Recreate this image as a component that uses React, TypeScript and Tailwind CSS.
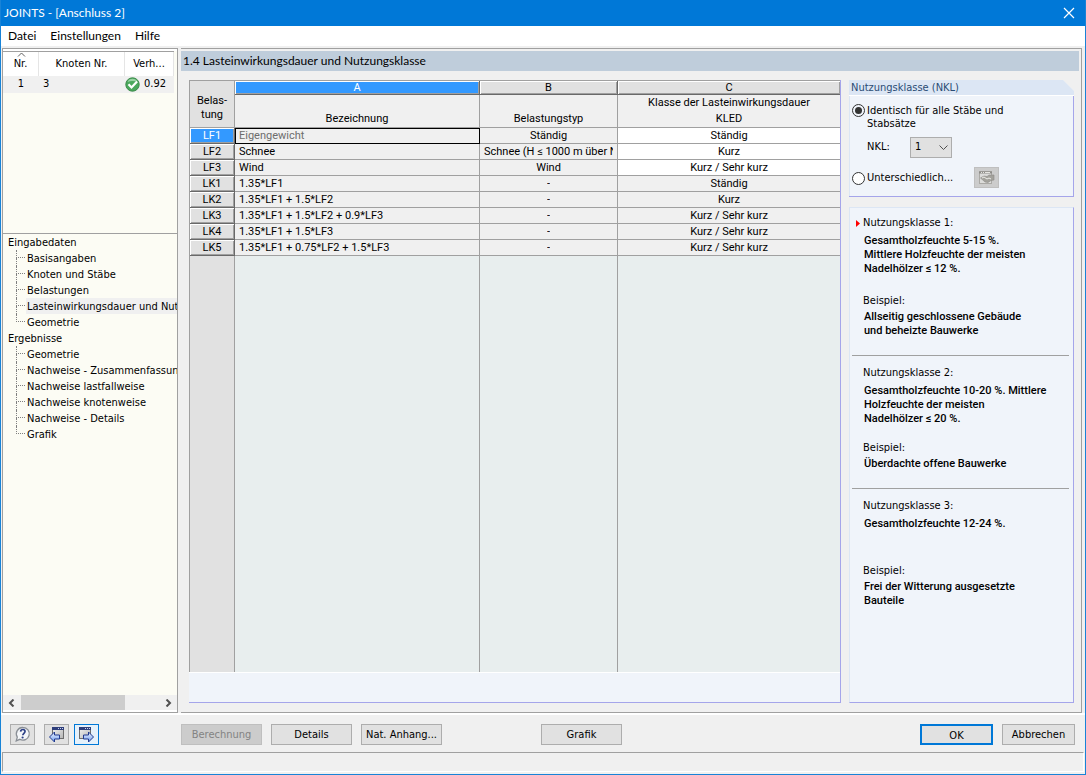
import { useState, type ReactNode } from "react";

const UI = "font-['DejaVu_Sans_Condensed','Open_Sans',sans-serif]";
const CAPTION = "font-['Lato',sans-serif]";
const GRID = "font-['Roboto',sans-serif]";
const BEVEL = "shadow-[inset_1px_1px_0_#ffffff,inset_-1px_-1px_0_#a0a0a0]";

const inputPages = [
  "Basisangaben",
  "Knoten und Stäbe",
  "Belastungen",
  "Lasteinwirkungsdauer und Nutzungsklasse",
  "Geometrie",
];
const resultPages = [
  "Geometrie",
  "Nachweise - Zusammenfassung",
  "Nachweise lastfallweise",
  "Nachweise knotenweise",
  "Nachweise - Details",
  "Grafik",
];

const loads = [
  { id: "LF1", name: "Eigengewicht", type: "Ständig", kled: "Ständig", editable: true },
  { id: "LF2", name: "Schnee", type: "Schnee (H ≤ 1000 m über NN)", kled: "Kurz", editable: true },
  { id: "LF3", name: "Wind", type: "Wind", kled: "Kurz / Sehr kurz", editable: true },
  { id: "LK1", name: "1.35*LF1", type: "-", kled: "Ständig", editable: false },
  { id: "LK2", name: "1.35*LF1 + 1.5*LF2", type: "-", kled: "Kurz", editable: false },
  { id: "LK3", name: "1.35*LF1 + 1.5*LF2 + 0.9*LF3", type: "-", kled: "Kurz / Sehr kurz", editable: false },
  { id: "LK4", name: "1.35*LF1 + 1.5*LF3", type: "-", kled: "Kurz / Sehr kurz", editable: false },
  { id: "LK5", name: "1.35*LF1 + 0.75*LF2 + 1.5*LF3", type: "-", kled: "Kurz / Sehr kurz", editable: false },
];

const classes = [
  {
    title: "Nutzungsklasse 1:",
    text: ["Gesamtholzfeuchte 5-15 %.", "Mittlere Holzfeuchte der meisten", "Nadelhölzer ≤ 12 %."],
    example: ["Allseitig geschlossene Gebäude", "und beheizte Bauwerke"],
    textBox: "min-h-[59px]",
    active: true,
  },
  {
    title: "Nutzungsklasse 2:",
    text: ["Gesamtholzfeuchte 10-20 %. Mittlere", "Holzfeuchte der meisten", "Nadelhölzer ≤ 20 %."],
    example: ["Überdachte offene Bauwerke"],
    textBox: "min-h-[56px]",
    active: false,
  },
  {
    title: "Nutzungsklasse 3:",
    text: ["Gesamtholzfeuchte 12-24 %."],
    example: ["Frei der Witterung ausgesetzte", "Bauteile"],
    textBox: "min-h-[46px]",
    active: false,
  },
];

function TreeGroup({ label, items, selected }: { label: string; items: string[]; selected?: string }) {
  return (
    <li>
      <div className="h-4 pl-[5px] leading-[18px]">{label}</div>
      <ul>
        {items.map((item, i) => (
          <li key={item} className="flex h-4 pl-[13px]">
            <span className="w-[9px] shrink-0">
              <span className="block h-2 border-b border-l border-dotted border-[#808080]" />
              {i < items.length - 1 && <span className="block h-2 border-l border-dotted border-[#808080]" />}
            </span>
            <a
              href="#"
              className={`ml-px grow pl-px leading-[18px] whitespace-nowrap ${item === selected ? "bg-[#f0f0f0]" : ""}`}
            >
              {item}
            </a>
          </li>
        ))}
      </ul>
    </li>
  );
}

function PushButton({ children, className = "", disabled }: { children: ReactNode; className?: string; disabled?: boolean }) {
  return (
    <button
      disabled={disabled}
      className={`h-[21px] shrink-0 text-center leading-[19px] whitespace-nowrap ${
        disabled ? "border border-[#bfbfbf] bg-[#cccccc] text-[#838383]" : ""
      } ${className}`}
    >
      {children}
    </button>
  );
}

function HelpIcon() {
  return (
    <svg width="17" height="17" viewBox="0 0 17 17" className="mx-auto">
      <path d="M9 1.500a6.300 6.300 0 1 1-3.100 11.800L2.200 14.800l1.100-3.700A6.300 6.300 0 0 1 9 1.500z" fill="#f4f6f9" stroke="#8a8f96" strokeWidth="1.300" />
      <path d="M6.600 5.600c.3-2.900 4.800-2.700 4.400 0-.2 1.700-2.100 1.700-2.200 3.600" fill="none" stroke="#2b3f86" strokeWidth="1.700" />
      <circle cx="8.600" cy="11.500" r="1.100" fill="#2b3f86" />
    </svg>
  );
}

function PageIcon({ forward }: { forward?: boolean }) {
  const id = forward ? "page-forward" : "page-back";
  return (
    <svg width="17" height="17" viewBox="0 0 17 17" className="mx-auto">
      <defs>
        <linearGradient id={id} x1="0" y1="0" x2="1" y2="1">
          <stop offset="0" stopColor="#f4f4f4" />
          <stop offset="1" stopColor="#b4b4b4" />
        </linearGradient>
        <linearGradient id={`${id}-arrow`} x1="0" y1="0" x2="0" y2="1">
          <stop offset="0" stopColor="#f2f7ff" />
          <stop offset="1" stopColor="#6f9cf0" />
        </linearGradient>
      </defs>
      <g transform={forward ? "translate(-3 0)" : undefined}>
        <rect x="4.500" y="1.500" width="11" height="11" fill={`url(#${id})`} stroke="#6e6e6e" />
        <rect x="4" y="1" width="12" height="3" fill="#2f3f7c" />
        <path d="M10 2.500h1M12 2.500h1M14 2.500h1" stroke="#c9d2ee" />
      </g>
      <path
        d={forward ? "M5.500 9h5V6l5 5-5 5v-3h-5z" : "M11.500 9h-5V6l-5 5 5 5v-3h5z"}
        fill={`url(#${id}-arrow)`}
        stroke="#20398f"
      />
    </svg>
  );
}

function CheckIcon() {
  return (
    <svg width="15" height="15" viewBox="0 0 15 15" className="shrink-0">
      <circle cx="7.500" cy="7.500" r="6.700" fill="#4aa85c" stroke="#3d8a4c" />
      <path d="M2.500 5a5.500 5.500 0 0 1 10 0c-3-1.500-7-1.500-10 0z" fill="#9ad3a4" />
      <path d="M3.500 7.300l3 3.200 5.600-6" fill="none" stroke="#ffffff" strokeWidth="2.200" />
    </svg>
  );
}

function PickIcon() {
  return (
    <svg width="17" height="15" viewBox="0 0 17 15" className="mx-auto">
      <rect x="1.500" y="1.500" width="12" height="12" fill="#dcdcda" stroke="#aaa9a5" />
      <path d="M1 2.500h13" stroke="#8d8c88" strokeWidth="2" />
      <path d="M3 2.500h1M5 2.500h1M7 2.500h5" stroke="#e6e5e0" />
      <path d="M2.500 8l3.500-2 3 .5 2-1.500h5v5l-3 .5-3 2-3-.5z" fill="#a3a29c" stroke="#8d8c88" strokeWidth=".6" />
      <path d="M4 8l2-1 3 2 2-1 2 1" stroke="#eeede8" fill="none" />
    </svg>
  );
}

export default function App() {
  const [mode, setMode] = useState("same");

  return (
    <div className={`flex min-h-screen flex-col border border-t-0 border-[#1883d7] bg-[#f0f0f0] text-[11px] text-black ${UI}`}>
      <header className={`flex h-[26px] shrink-0 items-center justify-between bg-[#0078d7] pr-2 pl-[3px] text-xs text-white ${CAPTION}`}>
        <h1>JOINTS - [Anschluss 2]</h1>
        <button aria-label="Schließen">
          <svg width="16" height="16" viewBox="0 0 16 16" fill="none" stroke="#ffffff" strokeWidth="1.200">
            <path d="M3 3l10 10M13 3L3 13" />
          </svg>
        </button>
      </header>
      <nav className={`flex h-5 shrink-0 items-center gap-[14px] bg-white px-[7px] text-xs ${CAPTION}`}>
        <button>Datei</button>
        <button>Einstellungen</button>
        <button>Hilfe</button>
      </nav>

      <div className="mt-[2px] flex grow gap-[3px] border-b-2 border-white pr-[3px] pl-px">
        <aside className="flex w-[176px] shrink-0 flex-col border border-[#a0a0a0] bg-[#fcfcf4]">
          <div className="h-[184px] shrink-0 border-t-2 border-white pr-[3px]">
            <table className="w-full table-fixed border-separate border-spacing-0 border-t border-[#a0a0a0]">
              <colgroup>
                <col className="w-9" />
                <col className="w-[86px]" />
                <col />
              </colgroup>
              <thead>
                <tr className="h-6 bg-white">
                  <th className="relative border-r border-[#e5e5e5] font-normal">
                    <svg width="9" height="5" viewBox="0 0 9 5" className="absolute top-0 left-[14px]" fill="none" stroke="#606060">
                      <path d="M1 4.500L4.500 1 8 4.500" />
                    </svg>
                    Nr.
                  </th>
                  <th className="border-r border-[#e5e5e5] font-normal">Knoten Nr.</th>
                  <th className="border-r border-[#e5e5e5] font-normal">Verh...</th>
                </tr>
              </thead>
              <tbody>
                <tr className="h-[17px] bg-[#f0f0f0]">
                  <td className="text-center">1</td>
                  <td className="pl-1">3</td>
                  <td>
                    <span className="flex items-center gap-1">
                      <CheckIcon />
                      0.92
                    </span>
                  </td>
                </tr>
              </tbody>
            </table>
          </div>
          <div className="flex w-full grow flex-col overflow-hidden border-t border-[#a0a0a0]">
            <ul className="grow overflow-hidden">
              <TreeGroup label="Eingabedaten" items={inputPages} selected={inputPages[3]} />
              <TreeGroup label="Ergebnisse" items={resultPages} />
            </ul>
            <div className="flex h-[17px] shrink-0 items-stretch border-b-2 border-white bg-[#f0f0f0]">
              <button aria-label="Nach links" className="w-[18px]">
                <svg width="8" height="8" viewBox="0 0 8 8" className="mx-auto" fill="none" stroke="#505050" strokeWidth="2">
                  <path d="M5.500 .5L2 4l3.500 3.500" />
                </svg>
              </button>
              <div className="grow">
                <div className="h-full w-3/4 bg-[#cdcdcd]" />
              </div>
              <button aria-label="Nach rechts" className="w-[18px]">
                <svg width="8" height="8" viewBox="0 0 8 8" className="mx-auto" fill="none" stroke="#505050" strokeWidth="2">
                  <path d="M2.500 .5L6 4 2.500 7.500" />
                </svg>
              </button>
            </div>
          </div>
        </aside>

        <main className="flex min-w-0 grow flex-col border border-l-0 border-[#a0a0a0]">
          <h2 className={`mt-[2px] mr-[2px] h-5 bg-[#bfcddb] pl-[2px] text-xs leading-5 ${CAPTION}`}>
            1.4 Lasteinwirkungsdauer und Nutzungsklasse
          </h2>
          <div className="flex grow gap-2 pt-[9px] pr-[7px] pb-[9px] pl-2">
            <section className={`flex min-w-0 grow flex-col border-r border-b border-[#a5a5ea] bg-[#f0f4fa] ${GRID}`}>
              <table className="w-full table-fixed border-separate border-spacing-0 border-t border-l border-[#a0a0a0] bg-[#f0f0f0]">
                <colgroup>
                  <col className="w-[45px]" />
                  <col className="w-[245px]" />
                  <col className="w-[138px]" />
                  <col />
                </colgroup>
                <thead>
                  <tr className="h-[14px] leading-[12px]">
                    <th rowSpan={2} className="border-r border-b border-[#a0a0a0] bg-[#e1e1e1] px-0 pt-2 leading-[14px] font-normal">
                      Belas-
                      <br />
                      tung
                    </th>
                    <th className={`border-r border-b border-[#696969] bg-[#3399ff] p-0 font-normal text-white ${BEVEL}`}>A</th>
                    <th className={`border-r border-b border-[#696969] bg-[#e1e1e1] p-0 font-normal ${BEVEL}`}>B</th>
                    <th className={`border-b border-[#696969] bg-[#e1e1e1] p-0 font-normal ${BEVEL}`}>C</th>
                  </tr>
                  <tr className="h-[33px] align-bottom leading-4">
                    <th className="border-r border-b border-[#a0a0a0] p-0 font-normal">Bezeichnung</th>
                    <th className="border-r border-b border-[#a0a0a0] p-0 font-normal">Belastungstyp</th>
                    <th className="border-b border-[#a0a0a0] p-0 font-normal">
                      Klasse der Lasteinwirkungsdauer
                      <br />
                      KLED
                    </th>
                  </tr>
                </thead>
                <tbody>
                  {loads.map((row, i) => (
                    <tr key={row.id} className="h-4 leading-[15px] whitespace-nowrap">
                      <th
                        className={`border-r border-b border-[#696969] p-0 font-normal ${BEVEL} ${
                          i === 0 ? "bg-[#3399ff] text-white" : "bg-[#e1e1e1]"
                        }`}
                      >
                        {row.id}
                      </th>
                      <td
                        className={`border-r border-b border-[#a0a0a0] p-0 pl-1 ${
                          i === 0 ? "text-[#6d6d6d] outline-1 -outline-offset-1 outline-black" : ""
                        }`}
                      >
                        {row.name}
                      </td>
                      <td className="border-r border-b border-[#a0a0a0] p-0 px-1">
                        <div className="mx-auto w-fit max-w-full overflow-hidden">{row.type}</div>
                      </td>
                      <td className={`border-b border-[#a0a0a0] p-0 text-center ${row.editable ? "bg-white" : ""}`}>
                        {row.kled}
                      </td>
                    </tr>
                  ))}
                </tbody>
              </table>
              <div className="grid grow grid-cols-[46px_245px_138px_1fr] border-b border-white bg-[#e8eeee]">
                <div className="border-r border-l border-[#a0a0a0] bg-[#e1e1e1]" />
                <div className="border-r border-[#a0a0a0]" />
                <div className="border-r border-[#a0a0a0]" />
              </div>
              <div className="h-[29px] shrink-0" />
            </section>

            <div className="flex w-[225px] shrink-0 flex-col gap-[10px]">
              <fieldset className="relative h-[117px] border-b border-[#a5a5ea] bg-[#f0f4fa] [clip-path:polygon(0_0,214px_0,100%_11px,100%_100%,0_100%)]">
                <div className="h-4 border-b border-white bg-[#dce6f4] pl-[2px] leading-4 text-[#2a4c74]">
                  Nutzungsklasse (NKL)
                </div>
                <div className="h-[100px] border-r border-l border-r-[#a5a5ea] border-l-[#dce6f4] pt-[8px] pl-[2px]">
                  <label className="flex gap-[2px] leading-[13px]">
                    <input
                      type="radio"
                      name="nkl"
                      checked={mode === "same"}
                      onChange={() => setMode("same")}
                      className="size-[13px] shrink-0 appearance-none rounded-full border border-[#333333] bg-white p-[2px] checked:bg-[#333333] checked:bg-clip-content"
                    />
                    <span>
                      Identisch für alle Stäbe und
                      <br />
                      Stabsätze
                    </span>
                  </label>
                  <div className="mt-[7px] flex items-center pl-[15px]">
                    <label htmlFor="nkl-value" className="w-[43px]">
                      NKL:
                    </label>
                    <div className="relative">
                      <select
                        id="nkl-value"
                        defaultValue="1"
                        className="block h-[21px] w-[42px] appearance-none border border-[#adadad] bg-[#e1e1e1] pl-1"
                      >
                        <option>1</option>
                        <option>2</option>
                        <option>3</option>
                      </select>
                      <svg width="9" height="6" viewBox="0 0 9 6" className="pointer-events-none absolute top-2 right-1" fill="none" stroke="#505050">
                        <path d="M.5 .5l4 4 4-4" />
                      </svg>
                    </div>
                  </div>
                  <div className="mt-[9px] flex items-center">
                    <label className="flex w-[122px] items-center gap-[2px] pt-px">
                      <input
                        type="radio"
                        name="nkl"
                        checked={mode === "different"}
                        onChange={() => setMode("different")}
                        className="size-[13px] shrink-0 appearance-none rounded-full border border-[#333333] bg-white p-[2px] checked:bg-[#333333] checked:bg-clip-content"
                      />
                      Unterschiedlich...
                    </label>
                    <button aria-label="Auswählen" disabled className="h-[21px] w-[25px] border border-[#bfbfbf] bg-[#cccccc]">
                      <PickIcon />
                    </button>
                  </div>
                </div>
              </fieldset>

              <section className="grow border border-t-[#dce6f4] border-r-[#a5a5ea] border-b-[#a5a5ea] border-l-[#dce6f4] bg-[#f0f4fa] pt-[7px] pr-1 pl-[2px]">
                {classes.map((c, i) => (
                  <article key={c.title} className={i > 0 ? "mt-[17px] border-t border-[#a0a0a0] pt-[9px]" : ""}>
                    <h3 className="flex h-4 items-center leading-4">
                      <span className="w-[11px] pl-1">
                        {c.active && (
                          <svg width="4" height="7" viewBox="0 0 4 7" fill="#ff0000">
                            <path d="M0 0l4 3.500L0 7z" />
                          </svg>
                        )}
                      </span>
                      {c.title}
                    </h3>
                    <p className={`mt-[3px] pl-3 leading-[14px] font-medium ${GRID} ${c.textBox}`}>
                      {c.text.map((line) => (
                        <span key={line} className="block">
                          {line}
                        </span>
                      ))}
                    </p>
                    <h4 className="pl-[11px] leading-4">Beispiel:</h4>
                    <p className={`mt-px pl-3 leading-[14px] font-medium ${GRID}`}>
                      {c.example.map((line) => (
                        <span key={line} className="block">
                          {line}
                        </span>
                      ))}
                    </p>
                  </article>
                ))}
              </section>
            </div>
          </div>
        </main>
      </div>

      <footer className="flex h-[37px] shrink-0 items-center pt-px pr-[10px] pl-[9px]">
        <PushButton className="w-[25px] border border-[#adadad] bg-[#e1e1e1]">
          <HelpIcon />
        </PushButton>
        <PushButton className="ml-[9px] w-[25px] border border-[#adadad] bg-[#e1e1e1]">
          <PageIcon />
        </PushButton>
        <PushButton className="ml-[5px] w-[25px] border border-[#0078d7] bg-[#e5f1fb]">
          <PageIcon forward />
        </PushButton>
        <PushButton className="ml-[82px] w-[81px]" disabled>
          Berechnung
        </PushButton>
        <PushButton className="ml-[9px] w-[81px] border border-[#adadad] bg-[#e1e1e1]">Details</PushButton>
        <PushButton className="ml-[9px] w-[81px] border border-[#adadad] bg-[#e1e1e1]">Nat. Anhang...</PushButton>
        <PushButton className="ml-[99px] w-[81px] border border-[#adadad] bg-[#e1e1e1]">Grafik</PushButton>
        <div className="grow" />
        <PushButton className="w-[73px] border-2 border-[#0078d7] bg-[#e1e1e1] leading-[17px]">OK</PushButton>
        <PushButton className="ml-[9px] w-[73px] border border-[#adadad] bg-[#e1e1e1]">Abbrechen</PushButton>
      </footer>
      <div className="mx-px mb-[2px] h-5 shrink-0 border border-[#a0a0a0] border-r-white border-b-white" />
    </div>
  );
}
